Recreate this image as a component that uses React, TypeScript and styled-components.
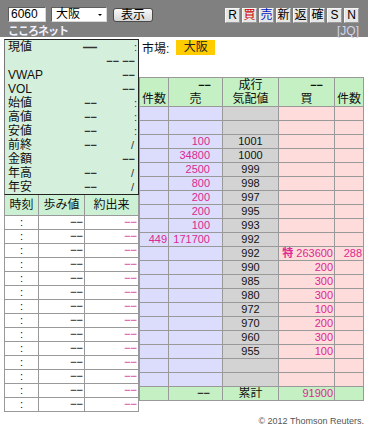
import React from "react";
import styled, { createGlobalStyle } from "styled-components";

const GlobalStyle = createGlobalStyle`
  html, body { margin: 0; padding: 0; background: #fff; }
  body {
    font-family: "Liberation Sans", "Noto Sans CJK JP", sans-serif;
    font-size: 12px;
    color: #111;
  }
  * { box-sizing: border-box; }
`;

const Page = styled.div`
  width: 368px;
  height: 432px;
  overflow: hidden;
`;

/* ---------- top bar ---------- */
const TopBar = styled.div`
  background: #808080;
  height: 37px;
  padding: 7px 8px 0 8px;
  display: flex;
  flex-direction: column;
`;

const ControlRow = styled.div`
  display: flex;
  align-items: flex-start;
  height: 16px;
`;

const CodeInput = styled.div`
  width: 38px;
  height: 15px;
  background: #fff;
  border: 1px solid;
  border-color: #5e5e5e #d8d8d8 #d8d8d8 #5e5e5e;
  padding-left: 2px;
  font-size: 12px;
  line-height: 13px;
  color: #000;
`;

const MarketSelect = styled.div`
  width: 56px;
  height: 15px;
  margin-left: 5px;
  background: #fff;
  border: 1px solid;
  border-color: #5e5e5e #d8d8d8 #d8d8d8 #5e5e5e;
  padding-left: 4px;
  display: flex;
  align-items: center;
  font-size: 12px;
  line-height: 13px;
  color: #000;
`;

const SelectArrow = styled.span`
  margin-left: auto;
  margin-right: 4px;
  width: 0;
  height: 0;
  border-left: 2px solid transparent;
  border-right: 2px solid transparent;
  border-top: 2px solid #000;
`;

const ShowButton = styled.div`
  width: 40px;
  height: 14px;
  margin-left: 6px;
  margin-top: 1px;
  border: 1px solid #4a4a4a;
  border-radius: 3px;
  background: linear-gradient(#fafafa, #d6d6d6);
  font-size: 12px;
  line-height: 12px;
  text-align: center;
  color: #000;
`;

const OrderButtons = styled.div`
  margin-left: auto;
  display: flex;
  gap: 2px;
  margin-top: 1px;
  margin-right: 1px;
`;

const OrderButton = styled.div<{ $color?: string }>`
  width: 15px;
  height: 15px;
  background: #e6e6e6;
  border: 1px solid;
  border-color: #f6f6f6 #9a9a9a #9a9a9a #f6f6f6;
  color: ${(p) => p.$color ?? "#000"};
  font-size: 12px;
  line-height: 13px;
  text-align: center;
`;

const NameRow = styled.div`
  margin-top: 2px;
  display: flex;
  justify-content: space-between;
  align-items: center;
  height: 12px;
`;

const CompanyName = styled.div`
  color: #f2f2ff;
  font-weight: bold;
  font-size: 11px;
  letter-spacing: -1px;
  line-height: 12px;
`;

const Exchange = styled.div`
  color: #d4d4ec;
  font-size: 12px;
  line-height: 12px;
  margin-right: 1px;
`;

/* ---------- main ---------- */
const Main = styled.div`
  display: flex;
  margin-top: 2px;
  padding-left: 4px;
`;

const LeftCol = styled.div`
  width: 135px;
  display: flex;
  flex-direction: column;
`;

const QuotePanel = styled.div`
  background: #d4f0dc;
  border: 1px solid #222;
  border-left-color: #777;
  padding: 0 0 0 3px;
  display: grid;
  grid-template-columns: 56px 33px 1fr;
  grid-auto-rows: 14px;
`;

const QuoteLabel = styled.div`
  font-size: 12px;
  line-height: 14px;
  color: #111;
  white-space: nowrap;
`;

const QuoteValue = styled.div<{ $wide?: boolean; $pad?: number }>`
  grid-column: ${(p) => (p.$wide ? "span 2" : "auto")};
  text-align: right;
  padding-right: ${(p) => p.$pad ?? 0}px;
  font-size: 11px;
  line-height: 14px;
  color: #333;
  white-space: nowrap;
`;

const Dash = styled.span<{ $long?: boolean }>`
  font-size: ${(p) => (p.$long ? 14 : 11)}px;
  font-weight: bold;
`;

const TradeGrid = styled.div`
  display: grid;
  grid-template-columns: 33px 45px 53px;
  grid-template-rows: 20px repeat(14, 13px);
  gap: 1px;
  padding: 1px;
  padding-top: 0;
  background: #999;
`;

const TradeHead = styled.div`
  background: #ccf0d4;
  text-align: center;
  font-size: 12px;
  line-height: 20px;
  color: #111;
`;

const TradeCell = styled.div<{ $align: "center" | "right"; $color: string }>`
  background: #fff;
  text-align: ${(p) => p.$align};
  padding-right: ${(p) => (p.$align === "right" ? 1 : 0)}px;
  color: ${(p) => p.$color};
  font-size: 11px;
  line-height: 13px;
`;

const RightCol = styled.div`
  display: flex;
  flex-direction: column;
`;

const MarketLine = styled.div`
  display: flex;
  align-items: center;
  height: 15px;
  margin-top: 1px;
  padding-left: 3px;
`;

const MarketLabel = styled.span`
  font-size: 12px;
  color: #111;
`;

const MarketBadge = styled.span`
  margin-left: 7px;
  width: 39px;
  height: 15px;
  background: #ffcc00;
  text-align: center;
  font-size: 12px;
  line-height: 15px;
  color: #222;
`;

type Tone = "sell" | "price" | "buy" | "head";
const toneBg: Record<Tone, string> = {
  sell: "#dcdcfc",
  price: "#d3d3d3",
  buy: "#ffdcdc",
  head: "#c4f0c4",
};

const BookGrid = styled.div`
  margin-top: 22px;
  display: grid;
  grid-template-columns: 28px 53px 55px 55px 28px;
  grid-template-rows: 28px repeat(21, 13px);
  gap: 1px;
  padding: 1px;
  background: #999;
  width: 225px;
`;

const BookHead = styled.div`
  background: ${toneBg.head};
  display: flex;
  flex-direction: column;
`;

const HeadLine = styled.div<{ $align: "center" | "right"; $pad?: number }>`
  height: 14px;
  line-height: 14px;
  text-align: ${(p) => p.$align};
  padding-right: ${(p) => p.$pad ?? 0}px;
  font-size: 12px;
  color: #111;
  white-space: nowrap;
`;

const BookCell = styled.div<{
  $tone: Tone;
  $align: "center" | "right";
  $pad: number;
  $color: string;
  $cjk?: boolean;
}>`
  background: ${(p) => toneBg[p.$tone]};
  text-align: ${(p) => p.$align};
  padding-right: ${(p) => p.$pad}px;
  color: ${(p) => p.$color};
  font-size: ${(p) => (p.$cjk ? 12 : 11)}px;
  line-height: 13px;
  white-space: nowrap;
  overflow: hidden;
`;

const Special = styled.span`
  font-weight: bold;
  font-size: 11px;
`;

const Copyright = styled.div`
  margin-top: 4px;
  padding-right: 4px;
  text-align: right;
  font-size: 9px;
  line-height: 11px;
  color: #555;
`;

/* ---------- data ---------- */
const DASH = "\u2212\u2212";
const PINK = "#dc2890";

type QuoteRow =
  | { label: string; val: "dash" | "long"; extra: string; pad: number }
  | { label: string; wide: number };

const quoteRows: QuoteRow[] = [
  { label: "現値", val: "long", extra: ":", pad: 1 },
  { label: "", wide: 2 },
  { label: "VWAP", wide: 1 },
  { label: "VOL", wide: 1 },
  { label: "始値", val: "dash", extra: ":", pad: 1 },
  { label: "高値", val: "dash", extra: ":", pad: 1 },
  { label: "安値", val: "dash", extra: ":", pad: 1 },
  { label: "前終", val: "dash", extra: "/", pad: 4 },
  { label: "金額", wide: 1 },
  { label: "年高", val: "dash", extra: "/", pad: 4 },
  { label: "年安", val: "dash", extra: "/", pad: 4 },
];

const bookCols: { tone: Tone; align: "center" | "right"; pad: number }[] = [
  { tone: "sell", align: "right", pad: 1 },
  { tone: "sell", align: "right", pad: 12 },
  { tone: "price", align: "center", pad: 0 },
  { tone: "buy", align: "right", pad: 1 },
  { tone: "buy", align: "right", pad: 1 },
];

const bookRows: string[][] = [
  ["", "", "", "", ""],
  ["", "", "", "", ""],
  ["", "100", "1001", "", ""],
  ["", "34800", "1000", "", ""],
  ["", "2500", "999", "", ""],
  ["", "800", "998", "", ""],
  ["", "200", "997", "", ""],
  ["", "200", "995", "", ""],
  ["", "100", "993", "", ""],
  ["449", "171700", "992", "", ""],
  ["", "", "992", "*263600", "288"],
  ["", "", "990", "200", ""],
  ["", "", "985", "300", ""],
  ["", "", "980", "300", ""],
  ["", "", "972", "100", ""],
  ["", "", "970", "200", ""],
  ["", "", "960", "300", ""],
  ["", "", "955", "100", ""],
  ["", "", "", "", ""],
  ["", "", "", "", ""],
];

const heads: [string, string][] = [
  ["", "件数"],
  ["dash", "売"],
  ["成行", "気配値"],
  ["dash", "買"],
  ["", "件数"],
];

export default function App() {
  return (
    <Page>
      <GlobalStyle />
      <TopBar>
        <ControlRow>
          <CodeInput>6060</CodeInput>
          <MarketSelect>
            大阪
            <SelectArrow />
          </MarketSelect>
          <ShowButton>表示</ShowButton>
          <OrderButtons>
            <OrderButton>R</OrderButton>
            <OrderButton $color="#d00000">買</OrderButton>
            <OrderButton $color="#0020c0">売</OrderButton>
            <OrderButton>新</OrderButton>
            <OrderButton>返</OrderButton>
            <OrderButton>確</OrderButton>
            <OrderButton>S</OrderButton>
            <OrderButton>N</OrderButton>
          </OrderButtons>
        </ControlRow>
        <NameRow>
          <CompanyName>こころネット</CompanyName>
          <Exchange>[JQ]</Exchange>
        </NameRow>
      </TopBar>

      <Main>
        <LeftCol>
          <QuotePanel>
            {quoteRows.map((r, i) =>
              "wide" in r ? (
                <React.Fragment key={i}>
                  <QuoteLabel>{r.label}</QuoteLabel>
                  <QuoteValue $wide $pad={3}>
                    {r.wide === 2 ? (
                      <>
                        <Dash>{DASH}</Dash> <Dash>{DASH}</Dash>
                      </>
                    ) : (
                      <Dash>{DASH}</Dash>
                    )}
                  </QuoteValue>
                </React.Fragment>
              ) : (
                <React.Fragment key={i}>
                  <QuoteLabel>{r.label}</QuoteLabel>
                  <QuoteValue>
                    {r.val === "long" ? <Dash $long>{"\u2014"}</Dash> : <Dash>{DASH}</Dash>}
                  </QuoteValue>
                  <QuoteValue $pad={r.pad}>{r.extra}</QuoteValue>
                </React.Fragment>
              )
            )}
          </QuotePanel>
          <TradeGrid>
            <TradeHead>時刻</TradeHead>
            <TradeHead>歩み値</TradeHead>
            <TradeHead>約出来</TradeHead>
            {Array.from({ length: 14 }).map((_, i) => (
              <React.Fragment key={i}>
                <TradeCell $align="center" $color="#111">:</TradeCell>
                <TradeCell $align="right" $color="#555">
                  <Dash>{DASH}</Dash>
                </TradeCell>
                <TradeCell $align="right" $color="#e070b8">
                  <Dash>{DASH}</Dash>
                </TradeCell>
              </React.Fragment>
            ))}
          </TradeGrid>
        </LeftCol>

        <RightCol>
          <MarketLine>
            <MarketLabel>市場:</MarketLabel>
            <MarketBadge>大阪</MarketBadge>
          </MarketLine>
          <BookGrid>
            {heads.map(([top, bottom], i) => (
              <BookHead key={i}>
                <HeadLine $align={i === 2 ? "center" : "right"} $pad={i === 2 ? 0 : 11}>
                  {top === "dash" ? <Dash>{DASH}</Dash> : top}
                </HeadLine>
                <HeadLine $align="center">{bottom}</HeadLine>
              </BookHead>
            ))}
            {bookRows.map((row, ri) =>
              row.map((v, ci) => {
                const c = bookCols[ci];
                const special = v.startsWith("*");
                return (
                  <BookCell
                    key={`${ri}-${ci}`}
                    $tone={c.tone}
                    $align={c.align}
                    $pad={c.pad}
                    $color={ci === 2 ? "#111" : PINK}
                  >
                    {special ? (
                      <>
                        <Special>特</Special> {v.slice(1)}
                      </>
                    ) : (
                      v
                    )}
                  </BookCell>
                );
              })
            )}
            <BookCell $tone="head" $align="right" $pad={1} $color={PINK} />
            <BookCell $tone="head" $align="right" $pad={12} $color="#333">
              <Dash>{DASH}</Dash>
            </BookCell>
            <BookCell $tone="head" $align="center" $pad={0} $color="#111" $cjk>
              累計
            </BookCell>
            <BookCell $tone="head" $align="right" $pad={1} $color={PINK}>
              91900
            </BookCell>
            <BookCell $tone="head" $align="right" $pad={1} $color={PINK} />
          </BookGrid>
        </RightCol>
      </Main>
      <Copyright>© 2012 Thomson Reuters.</Copyright>
    </Page>
  );
}
